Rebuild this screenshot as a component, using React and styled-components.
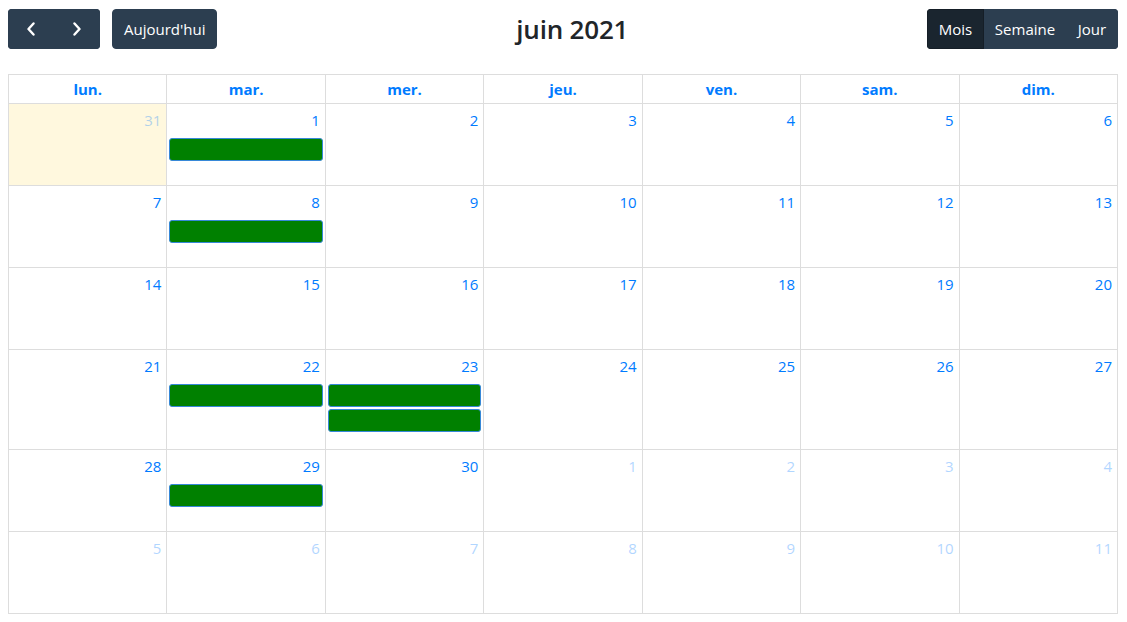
import React from 'react'
import styled, { createGlobalStyle } from 'styled-components';

const GlobalStyle = createGlobalStyle`
  body {
    margin: 0;
    background: #ffffff;
    font-family: "Open Sans", "Noto Sans", sans-serif;
    font-size: 15px;
  }
`;

const Page = styled.div`
  padding: 9px 9px 8px 8px;
`;

const Toolbar = styled.div`
  display: flex;
  align-items: center;
  justify-content: space-between;
  height: 40px;
  margin-bottom: 25px;
`;

const Chunk = styled.div`
  display: flex;
  align-items: center;
`;

const ButtonGroup = styled.div`
  display: flex;
  border-radius: 4px;
  overflow: hidden;
`;

const Button = styled.button`
  height: 40px;
  padding: 0 ${p => p.$pad || 11}px;
  border: 1px solid ${p => (p.$active ? '#151e27' : '#2c3e50')};
  background: ${p => (p.$active ? '#1a252f' : '#2c3e50')};
  color: #ffffff;
  font-family: inherit;
  font-size: 15px;
  border-radius: ${p => (p.$alone ? '4px' : '0')};
  margin-left: ${p => p.$gap || 0}px;
  display: flex;
  align-items: center;
  justify-content: center;
  width: ${p => (p.$w ? p.$w + 'px' : 'auto')};
`;

const Title = styled.h2`
  margin: 0;
  font-size: 26px;
  font-weight: 600;
  color: #212529;
  letter-spacing: -0.2px;
`;

const Grid = styled.div`
  display: grid;
  grid-template-columns: repeat(7, 1fr);
  border-top: 1px solid #ddd;
  border-left: 1px solid #ddd;
`;

const HeadCell = styled.div`
  height: 28px;
  border-right: 1px solid #ddd;
  border-bottom: 1px solid #ddd;
  display: flex;
  align-items: center;
  justify-content: center;
  color: #007bff;
  font-weight: 700;
  font-size: 15px;
`;

const DayCell = styled.div`
  min-height: 81px;
  border-right: 1px solid #ddd;
  border-bottom: 1px solid #ddd;
  background: ${p => (p.$today ? '#fff8de' : '#ffffff')};
  display: flex;
  flex-direction: column;
`;

const DayNumber = styled.div`
  align-self: flex-end;
  padding: 6px 5px 4px 4px;
  line-height: 21px;
  font-size: 15px;
  color: #007bff;
  opacity: ${p => (p.$other ? 0.3 : 1)};
`;

const Events = styled.div`
  display: flex;
  flex-direction: column;
  gap: 2px;
  margin-top: 3px;
  padding: 0 2px 17px;
`;

const EventBar = styled.div`
  height: 21px;
  background: #008000;
  border: 1px solid #3788d8;
  border-radius: 3px;
`;

const Chevron = ({ dir }) => (
  <svg width="10" height="14" viewBox="0 0 10 14">
    <path
      d={dir === 'left' ? 'M7.5 1.5 L2.5 7 L7.5 12.5' : 'M2.5 1.5 L7.5 7 L2.5 12.5'}
      fill="none"
      stroke="#ffffff"
      strokeWidth="2.4"
      strokeLinecap="round"
      strokeLinejoin="round"
    />
  </svg>
);

const heads = ['lun.', 'mar.', 'mer.', 'jeu.', 'ven.', 'sam.', 'dim.'];

const events = { 1: 1, 8: 1, 22: 1, 23: 2, 29: 1 };

function buildDays() {
  const days = [{ n: 31, other: true, today: true }];
  for (let i = 1; i <= 30; i++) days.push({ n: i, other: false, events: events[i] || 0 });
  for (let i = 1; i <= 11; i++) days.push({ n: i, other: true });
  return days;
}

function App() {
  const days = buildDays();
  return (
    <Page>
      <GlobalStyle />
      <Toolbar>
        <Chunk>
          <ButtonGroup>
            <Button $w={46} aria-label="prev"><Chevron dir="left" /></Button>
            <Button $w={46} aria-label="next"><Chevron dir="right" /></Button>
          </ButtonGroup>
          <Button $alone $gap={12} $pad={11}>Aujourd'hui</Button>
        </Chunk>
        <Title>juin 2021</Title>
        <Chunk>
          <ButtonGroup>
            <Button $active $w={57}>Mois</Button>
            <Button $w={82}>Semaine</Button>
            <Button $w={52}>Jour</Button>
          </ButtonGroup>
        </Chunk>
      </Toolbar>
      <Grid>
        {heads.map(h => <HeadCell key={h}>{h}</HeadCell>)}
        {days.map((d, i) => (
          <DayCell key={i} $today={d.today}>
            <DayNumber $other={d.other}>{d.n}</DayNumber>
            {d.events > 0 && (
              <Events>
                {Array.from({ length: d.events }).map((_, j) => <EventBar key={j} />)}
              </Events>
            )}
          </DayCell>
        ))}
      </Grid>
    </Page>
  )
}

export default App
